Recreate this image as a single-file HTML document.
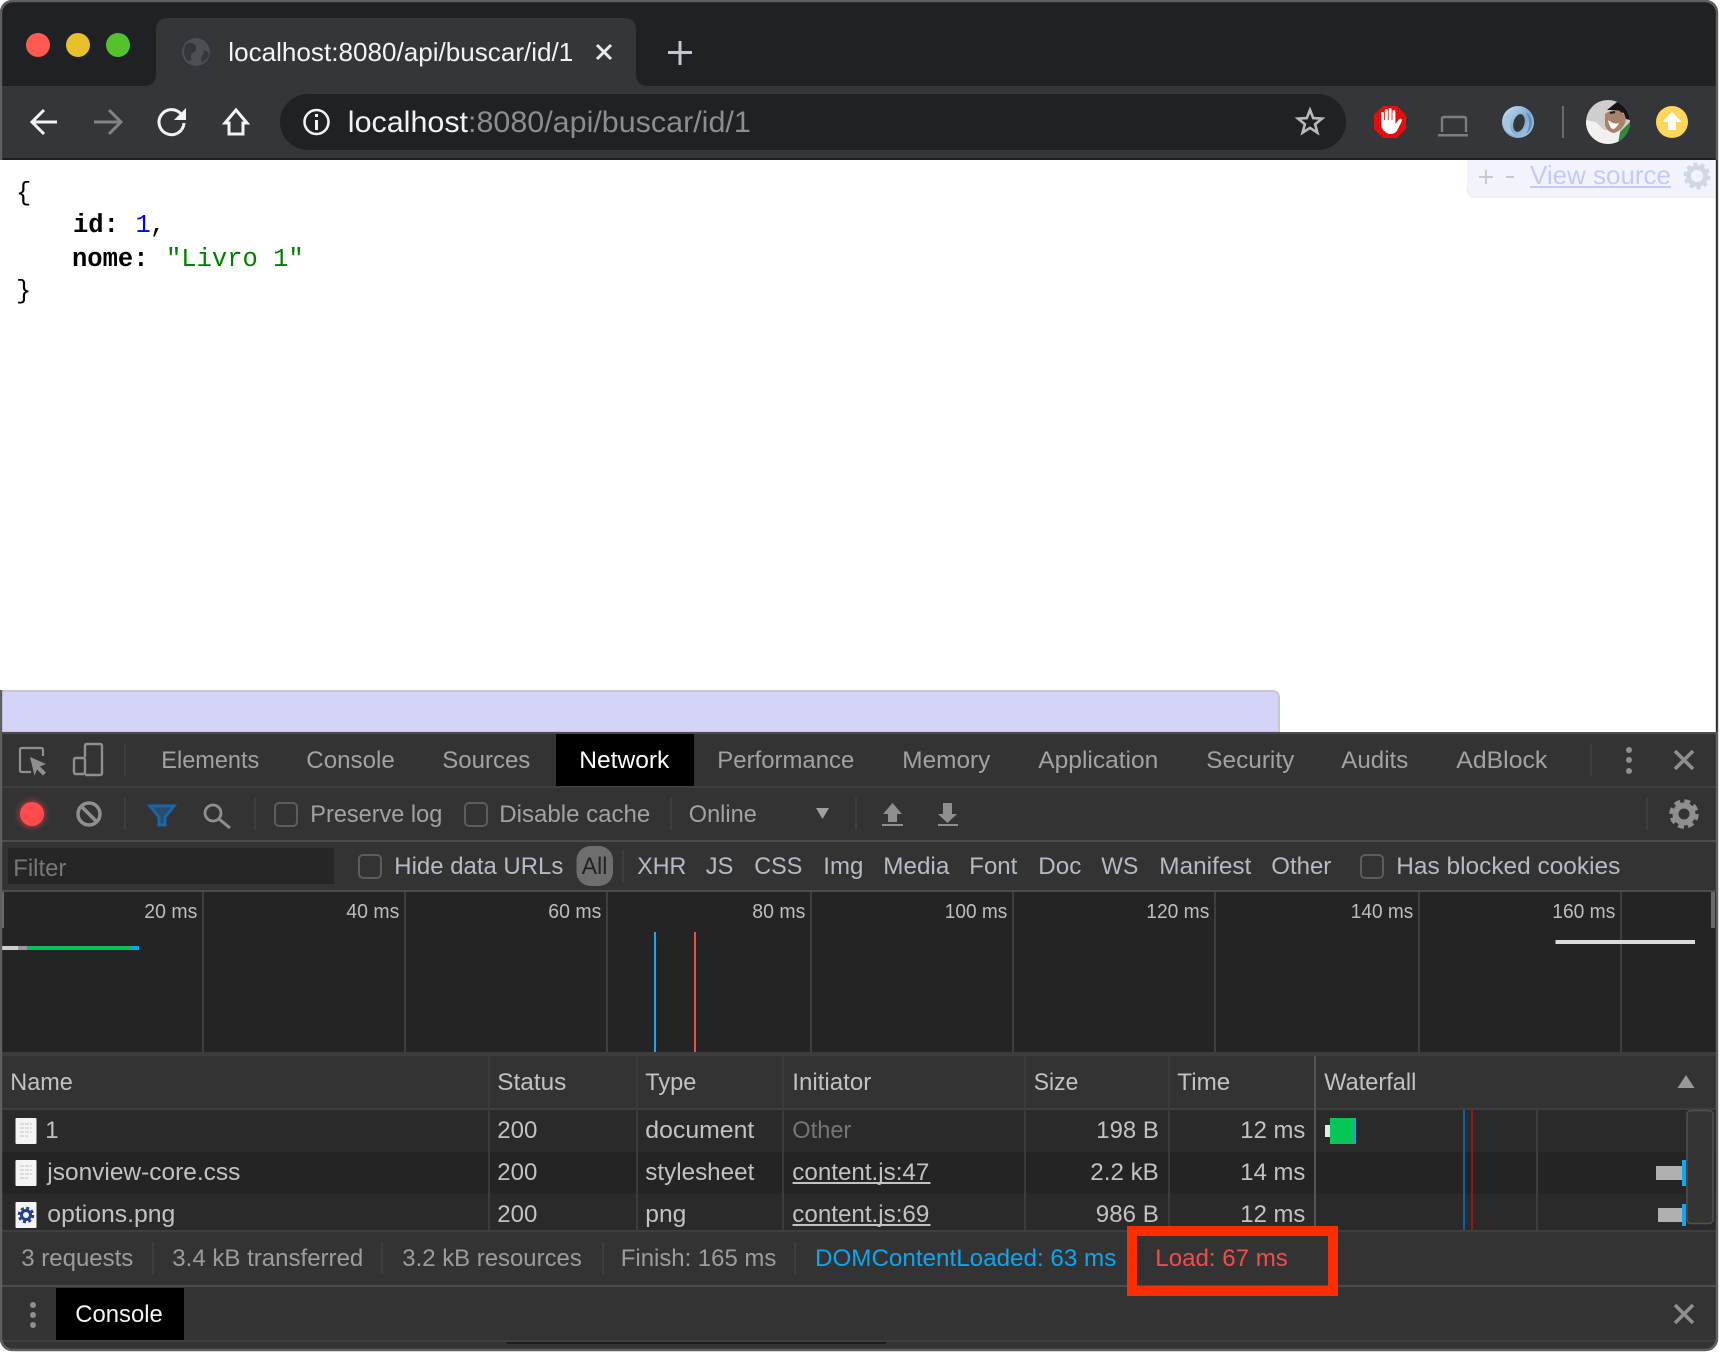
<!DOCTYPE html>
<html lang="en"><head><meta charset="utf-8"><title>localhost:8080/api/buscar/id/1</title>
<style>
html,body{margin:0;padding:0;width:1720px;height:1352px;overflow:hidden;background:#fff}
svg{display:block}
text{font-family:"Liberation Sans",sans-serif;white-space:pre;transform:translateX(-.7px)}
.m{font-family:"Liberation Mono",monospace;font-size:25.5px;transform:none}
.t{font-size:24px;fill:#a2a2a2}
.f{font-size:24px;fill:#b5bbc4}
.r{font-size:24px;fill:#c2c2c2}
.s{font-size:24px;fill:#9c9c9c}
.g{font-size:20px;fill:#bdbdbd}
.ln{fill:#3e3e3e}
</style></head><body>
<svg width="1720" height="1352" viewBox="0 0 1720 1352" xmlns="http://www.w3.org/2000/svg">
<defs>
<clipPath id="win"><rect x="0" y="0" width="1718" height="1351" rx="12"/></clipPath>
<linearGradient id="ring" x1="0" y1="0" x2="1" y2="1"><stop offset="0" stop-color="#d4e3f2"/><stop offset=".55" stop-color="#7ea8d2"/><stop offset="1" stop-color="#b4cfe8"/></linearGradient>
<clipPath id="av"><circle cx="1608" cy="122" r="22"/></clipPath>
<filter id="glow" x="-60%" y="-60%" width="220%" height="220%"><feGaussianBlur stdDeviation="3"/></filter>
</defs>
<g clip-path="url(#win)">
<!-- page -->
<rect width="1720" height="1352" fill="#fff"/>
<!-- tab strip -->
<rect width="1720" height="86" fill="#202124"/>
<rect width="1720" height="2" fill="#8a8a8a"/>
<path d="M144 86q12 0 12-12V30q0-12 12-12h456q12 0 12 12v44q0 12 12 12z" fill="#35363a"/>
<circle cx="38" cy="45" r="12" fill="#ff5a52"/>
<circle cx="78" cy="45" r="12" fill="#e8c02a"/>
<circle cx="118" cy="45" r="12" fill="#53c22b"/>
<circle cx="196" cy="52" r="14" fill="#4c4e53"/>
<path d="M186 44q6-3 9 1t-1 7q-5 3-2 8l-4 1q-7-7-2-17zM204 50q4 1 5 4-2 6-7 8-2-3 0-6t2-6z" fill="#35363a"/>
<text x="229" y="61" font-size="26" fill="#f1f3f4" textLength="345" lengthAdjust="spacingAndGlyphs">localhost:8080/api/buscar/id/1</text>
<path d="M597 45l14 14M611 45l-14 14" stroke="#e8eaed" stroke-width="3" fill="none"/>
<path d="M680 41v24M668 52.500h24" stroke="#c4c7cc" stroke-width="3" fill="none"/>
<!-- toolbar -->
<rect y="86" width="1720" height="72" fill="#35363a"/>
<rect y="158" width="1720" height="2" fill="#1f1f22"/>
<rect x="280" y="94" width="1066" height="56" rx="28" fill="#202124"/>
<path d="M57 122H33M44 110l-12 12 12 12" stroke="#f1f3f4" stroke-width="3" fill="none"/>
<path d="M94 122h26M109 110l12 12-12 12" stroke="#818386" stroke-width="3" fill="none"/>
<path d="M181 114a12.500 12.500 0 1 0 3 9" stroke="#f1f3f4" stroke-width="3" fill="none"/>
<path d="M174 120h12v-12z" fill="#f1f3f4"/>
<path d="M236 110l-11 13h4v11h14v-11h4z" stroke="#f1f3f4" stroke-width="3" fill="none" stroke-linejoin="miter"/>
<circle cx="316.500" cy="122" r="12" stroke="#f1f3f4" stroke-width="2.600" fill="none"/>
<rect x="315" y="120" width="3" height="10" fill="#f1f3f4"/><rect x="315" y="114" width="3" height="3" fill="#f1f3f4"/>
<text x="348.500" y="132" font-size="30" fill="#f1f3f4" textLength="403" lengthAdjust="spacingAndGlyphs">localhost<tspan fill="#8b8d90">:8080/api/buscar/id/1</tspan></text>
<path d="M1310 109.900L1313.200 118.100L1322 118.600L1315.100 124.200L1317.400 132.700L1310 127.900L1302.600 132.700L1304.900 124.200L1298 118.600L1306.800 118.100Z" stroke="#b8b9bb" stroke-width="2.600" fill="none"/>
<!-- ext icons -->
<path d="M1383 106h14l9 9v14l-9 9h-14l-9-9v-14z" fill="#e40e0e"/>
<path d="M1384 131q-3-3-3-8v-9q0-2 1.500-2t1.500 2v6h.800v-9q0-2 1.500-2t1.500 2v9h.800v-10q0-2 1.500-2t1.500 2v10h.800v-8q0-2 1.500-2t1.500 2v12l3-4q2-2 3-1t0 3l-4 8q-2 4-7 4-3 0-6-3z" fill="#fff"/>
<path d="M1442 132v-13q0-2 2-2h20q2 0 2 2v13" stroke="#7d7d7d" stroke-width="2.400" fill="none"/>
<rect x="1438" y="134" width="30" height="2.500" fill="#7d7d7d"/>
<circle cx="1518" cy="122" r="16" fill="url(#ring)"/>
<ellipse cx="1519" cy="123" rx="5.500" ry="9" fill="#35363a" transform="rotate(15 1519 123)"/>
<path d="M1503 124q2-14 17-16-9 5-10 14t6 14q-11-2-13-12z" fill="#a9c6e2"/>
<path d="M1526 112q6 4 6 11t-6 11q3-5 3-11t-3-11z" fill="#5d8dbd"/>
<rect x="1562" y="106" width="2" height="32" fill="#6a6b6e"/>
<g clip-path="url(#av)">
<rect x="1586" y="100" width="44" height="44" fill="#cfcdcd"/>
<path d="M1586 120l10 2 8 8 16 0v14h-34z" fill="#f2f1f0"/>
<path d="M1605 114q8-6 17-3l4 8q-2 11-12 14-7-1-9-8z" fill="#a9826a"/>
<path d="M1607 110l10-8 13 0 0 18-4-1-3-8-10-1z" fill="#141414"/>
<path d="M1620 132l10-10v16l-12 6z" fill="#2f8a3c"/>
<path d="M1608 120q6 5 11 3-3 6-6 6t-5-9z" fill="#fff"/>
<path d="M1610 113l5-1M1620 111l4 1" stroke="#1c1c1c" stroke-width="2"/>
</g>
<circle cx="1672" cy="122" r="16" fill="#ffd65c"/>
<path d="M1672 112l10 10h-6v8h-8v-8h-6z" fill="#fff"/>
<!-- view source -->
<path d="M1467 160h251v37h-243q-8 0-8-8z" fill="#f2f3fd"/>
<path d="M1467 187q0 10 8 10h243" stroke="#ecedf3" stroke-width="1.500" fill="none"/>
<path d="M1486 170v14M1479 177h14" stroke="#c9c9c9" stroke-width="2" fill="none"/>
<rect x="1506" y="176" width="8" height="2" fill="#c9c9c9"/>
<text x="1530.700" y="184" font-size="26" fill="#c3c9ff" textLength="141" lengthAdjust="spacingAndGlyphs">View source</text>
<rect x="1530" y="186" width="141" height="2" fill="#c3c9ff"/>
<circle cx="1697" cy="176" r="8.500" fill="none" stroke="#d0d8e6" stroke-width="5"/>
<circle cx="1697" cy="176" r="12" fill="none" stroke="#d0d8e6" stroke-width="3" stroke-dasharray="4 3.500"/>
<!-- JSON -->
<text class="m" x="16" y="200">{</text>
<text class="m" x="73" y="232" font-weight="bold">id:</text>
<text class="m" x="135.500" y="232" fill="#0000ff">1</text>
<text class="m" x="150" y="232">,</text>
<text class="m" x="72" y="266" font-weight="bold">nome:</text>
<text class="m" x="166" y="266" fill="#008000">"Livro 1"</text>
<text class="m" x="16" y="298">}</text>
<!-- lavender -->
<path d="M0 691h1272q7 0 7 7v34H0z" fill="#d3d4f7" stroke="#c8c8c8" stroke-width="2"/>
<!-- devtools -->
<rect y="732" width="1720" height="620" fill="#333"/>
<rect y="732" width="1720" height="2" fill="#4c4c4c"/>
<rect x="556" y="734" width="138" height="52" fill="#000"/>
<rect y="786" width="1720" height="2" class="ln"/>
<rect y="840" width="1720" height="2" fill="#4c4c4c"/>
<rect y="890" width="1720" height="2" fill="#4c4c4c"/>
<!-- row1 icons -->
<path d="M31 772h-9q-2 0-2-2v-20q0-2 2-2h19q2 0 2 2v6" stroke="#8f8f8f" stroke-width="2.200" fill="none"/>
<path d="M30 757l16 7-6 2.500 6 6-3 3-6-6-2.500 6z" fill="#8f8f8f"/>
<path d="M85 757v-11q0-2 2-2h13q2 0 2 2v27q0 2-2 2H85" stroke="#8f8f8f" stroke-width="2.400" fill="none"/>
<rect x="74" y="758" width="11" height="16" rx="1.500" fill="none" stroke="#8f8f8f" stroke-width="2.400"/>
<rect x="124" y="744" width="2" height="32" class="ln"/>
<text class="t" x="162" y="768" textLength="98" lengthAdjust="spacingAndGlyphs">Elements</text>
<text class="t" x="307" y="768" textLength="88.500" lengthAdjust="spacingAndGlyphs">Console</text>
<text class="t" x="443" y="768" textLength="88" lengthAdjust="spacingAndGlyphs">Sources</text>
<text x="580" y="768" font-size="24" fill="#fff" textLength="90" lengthAdjust="spacingAndGlyphs">Network</text>
<text class="t" x="718" y="768" textLength="137" lengthAdjust="spacingAndGlyphs">Performance</text>
<text class="t" x="903" y="768" textLength="88" lengthAdjust="spacingAndGlyphs">Memory</text>
<text class="t" x="1039" y="768" textLength="120" lengthAdjust="spacingAndGlyphs">Application</text>
<text class="t" x="1207" y="768" textLength="88" lengthAdjust="spacingAndGlyphs">Security</text>
<text class="t" x="1342" y="768" textLength="67" lengthAdjust="spacingAndGlyphs">Audits</text>
<text class="t" x="1457" y="768" textLength="91" lengthAdjust="spacingAndGlyphs">AdBlock</text>
<rect x="1590" y="744" width="2" height="32" class="ln"/>
<circle cx="1629" cy="750" r="3" fill="#8f8f8f"/><circle cx="1629" cy="760" r="3" fill="#8f8f8f"/><circle cx="1629" cy="771" r="3" fill="#8f8f8f"/>
<path d="M1675 751l18 18M1693 751l-18 18" stroke="#8f8f8f" stroke-width="3.500" fill="none"/>
<!-- row2 -->
<circle cx="32" cy="814" r="14" fill="#ff4b4b" opacity=".45" filter="url(#glow)"/>
<circle cx="32" cy="814" r="12" fill="#ff4b4b"/>
<circle cx="89" cy="814" r="11" fill="none" stroke="#8f8f8f" stroke-width="3.500"/>
<path d="M81 806l16 16" stroke="#8f8f8f" stroke-width="3.500"/>
<rect x="124" y="798" width="2" height="32" class="ln"/>
<path d="M150 806h24l-9 11v8h-6v-8z" fill="#2e4a66" stroke="#1467ab" stroke-width="3"/>
<circle cx="213" cy="813" r="8" fill="none" stroke="#8f8f8f" stroke-width="2.800"/>
<path d="M219 819l11 9" stroke="#8f8f8f" stroke-width="3"/>
<rect x="254" y="798" width="2" height="32" class="ln"/>
<rect x="275" y="803" width="22" height="23" rx="4" fill="none" stroke="#5c5c5c" stroke-width="2"/>
<text class="t" x="311" y="822" textLength="132" lengthAdjust="spacingAndGlyphs">Preserve log</text>
<rect x="465" y="803" width="22" height="23" rx="4" fill="none" stroke="#5c5c5c" stroke-width="2"/>
<text class="t" x="500" y="822" textLength="151" lengthAdjust="spacingAndGlyphs">Disable cache</text>
<rect x="670" y="798" width="2" height="32" class="ln"/>
<text class="t" x="689.500" y="822" textLength="68" lengthAdjust="spacingAndGlyphs">Online</text>
<path d="M816 808h13l-6.500 11z" fill="#a0a0a0"/>
<rect x="855" y="798" width="2" height="32" class="ln"/>
<path d="M892.500 803l9.500 11h-5v8h-9v-8h-5z" fill="#8f8f8f"/><rect x="882" y="824" width="21" height="2" fill="#8f8f8f"/>
<path d="M943 803h9v11h5l-9.500 9-9.500-9h5z" fill="#8f8f8f"/><rect x="938" y="824" width="20" height="2" fill="#8f8f8f"/>
<rect x="1646" y="798" width="2" height="32" class="ln"/>
<circle cx="1684" cy="814" r="8.500" fill="none" stroke="#8f8f8f" stroke-width="6"/>
<circle cx="1684" cy="814" r="13" fill="none" stroke="#8f8f8f" stroke-width="3.500" stroke-dasharray="6 4.200"/>
<!-- row3 -->
<rect x="8" y="848" width="326" height="36" fill="#262626"/>
<text x="14" y="876" font-size="24" fill="#777" textLength="53" lengthAdjust="spacingAndGlyphs">Filter</text>
<rect x="359" y="855" width="22" height="23" rx="4" fill="none" stroke="#5c5c5c" stroke-width="2"/>
<text class="f" x="395" y="874" textLength="169" lengthAdjust="spacingAndGlyphs">Hide data URLs</text>
<rect x="576.500" y="846" width="36.500" height="40" rx="14" fill="#6e6e6e"/>
<text x="582.500" y="874" font-size="24" fill="#222" textLength="25.500" lengthAdjust="spacingAndGlyphs">All</text>
<rect x="622" y="850" width="2" height="32" class="ln"/>
<text class="f" x="638" y="874" textLength="49" lengthAdjust="spacingAndGlyphs">XHR</text>
<text class="f" x="706.500" y="874" textLength="27.500" lengthAdjust="spacingAndGlyphs">JS</text>
<text class="f" x="755" y="874" textLength="48" lengthAdjust="spacingAndGlyphs">CSS</text>
<text class="f" x="824" y="874" textLength="40" lengthAdjust="spacingAndGlyphs">Img</text>
<text class="f" x="884" y="874" textLength="66" lengthAdjust="spacingAndGlyphs">Media</text>
<text class="f" x="970" y="874" textLength="48" lengthAdjust="spacingAndGlyphs">Font</text>
<text class="f" x="1039" y="874" textLength="43" lengthAdjust="spacingAndGlyphs">Doc</text>
<text class="f" x="1102" y="874" textLength="37" lengthAdjust="spacingAndGlyphs">WS</text>
<text class="f" x="1160" y="874" textLength="92" lengthAdjust="spacingAndGlyphs">Manifest</text>
<text class="f" x="1272" y="874" textLength="60" lengthAdjust="spacingAndGlyphs">Other</text>
<rect x="1361" y="855" width="22" height="23" rx="4" fill="none" stroke="#5c5c5c" stroke-width="2"/>
<text class="f" x="1397" y="874" textLength="224" lengthAdjust="spacingAndGlyphs">Has blocked cookies</text>
<!-- timeline -->
<rect y="892" width="1720" height="160" fill="#242424"/>
<rect x="202" y="892" width="2" height="160" class="ln"/><rect x="404" y="892" width="2" height="160" class="ln"/><rect x="606" y="892" width="2" height="160" class="ln"/><rect x="810" y="892" width="2" height="160" class="ln"/><rect x="1012" y="892" width="2" height="160" class="ln"/><rect x="1214" y="892" width="2" height="160" class="ln"/><rect x="1418" y="892" width="2" height="160" class="ln"/><rect x="1620" y="892" width="2" height="160" class="ln"/>
<text class="g" x="145" y="918" textLength="53" lengthAdjust="spacingAndGlyphs">20 ms</text>
<text class="g" x="347" y="918" textLength="53" lengthAdjust="spacingAndGlyphs">40 ms</text>
<text class="g" x="549" y="918" textLength="53" lengthAdjust="spacingAndGlyphs">60 ms</text>
<text class="g" x="753" y="918" textLength="53" lengthAdjust="spacingAndGlyphs">80 ms</text>
<text class="g" x="945.500" y="918" textLength="62.500" lengthAdjust="spacingAndGlyphs">100 ms</text>
<text class="g" x="1147" y="918" textLength="63" lengthAdjust="spacingAndGlyphs">120 ms</text>
<text class="g" x="1351.500" y="918" textLength="62.500" lengthAdjust="spacingAndGlyphs">140 ms</text>
<text class="g" x="1553" y="918" textLength="63" lengthAdjust="spacingAndGlyphs">160 ms</text>
<rect x="2" y="892" width="2" height="36" fill="#6a6a6a"/><rect x="1711" y="892" width="4" height="36" fill="#6a6a6a"/>
<rect x="2" y="946" width="16" height="4" fill="#cfcfcf"/><rect x="18" y="946" width="9" height="4" fill="#9a9a9a"/><rect x="27" y="946" width="104" height="4" fill="#0bbf5c"/><rect x="131" y="946" width="8" height="4" fill="#0ea5f0"/>
<rect x="1555.500" y="940" width="139.500" height="4" fill="#dcdcdc"/>
<rect x="654" y="932" width="2" height="120" fill="#18a5f3"/>
<rect x="694" y="932" width="2" height="120" fill="#f04c4c"/>
<!-- table header -->
<rect y="1052" width="1720" height="4" fill="#3c3c3c"/>
<rect y="1056" width="1720" height="52" fill="#333"/>
<rect y="1108" width="1720" height="2" class="ln"/>
<text class="r" x="11" y="1090" textLength="62.500" lengthAdjust="spacingAndGlyphs">Name</text>
<text class="r" x="498" y="1090" textLength="69" lengthAdjust="spacingAndGlyphs">Status</text>
<text class="r" x="646" y="1090" textLength="51" lengthAdjust="spacingAndGlyphs">Type</text>
<text class="r" x="793" y="1090" textLength="79" lengthAdjust="spacingAndGlyphs">Initiator</text>
<text class="r" x="1034.500" y="1090" textLength="44.500" lengthAdjust="spacingAndGlyphs">Size</text>
<text class="r" x="1178" y="1090" textLength="53" lengthAdjust="spacingAndGlyphs">Time</text>
<text class="r" x="1325" y="1090" textLength="92" lengthAdjust="spacingAndGlyphs">Waterfall</text>
<path d="M1686 1075l8.500 13h-17z" fill="#9a9a9a"/>
<!-- rows -->
<rect y="1110" width="1720" height="42" fill="#2a2a2a"/>
<rect y="1152" width="1720" height="42" fill="#242424"/>
<rect y="1194" width="1720" height="36" fill="#2a2a2a"/>
<g fill="#3b3b3b"><rect x="488" y="1056" width="2" height="174"/><rect x="636" y="1056" width="2" height="174"/><rect x="782" y="1056" width="2" height="174"/><rect x="1024" y="1056" width="2" height="174"/><rect x="1168" y="1056" width="2" height="174"/></g>
<rect x="1314" y="1056" width="2" height="174" fill="#555"/>
<!-- file icons -->
<rect x="15.500" y="1118" width="21" height="26" rx="1" fill="#f4f4f4"/>
<path d="M20 1124h12M20 1128h12M20 1132h12M20 1136h8" stroke="#d4d4d4" stroke-width="1.500" stroke-dasharray="4 1"/>
<rect x="15.500" y="1160" width="21" height="26" rx="1" fill="#f4f4f4"/>
<path d="M20 1166h12M20 1170h12M20 1174h12M20 1178h8" stroke="#d4d4d4" stroke-width="1.500" stroke-dasharray="4 1"/>
<rect x="15.500" y="1202" width="21" height="26" rx="1" fill="#f4f4f4"/>
<circle cx="26" cy="1215" r="4.500" fill="none" stroke="#22408c" stroke-width="3"/>
<circle cx="26" cy="1215" r="7" fill="none" stroke="#22408c" stroke-width="2.500" stroke-dasharray="3 2.500"/>
<!-- row text -->
<text class="r" x="46" y="1138">1</text>
<text class="r" x="498" y="1138" textLength="40" lengthAdjust="spacingAndGlyphs">200</text>
<text class="r" x="646" y="1138" textLength="109" lengthAdjust="spacingAndGlyphs">document</text>
<text x="793" y="1138" font-size="24" fill="#757575" textLength="59" lengthAdjust="spacingAndGlyphs">Other</text>
<text class="r" x="1097" y="1138" textLength="62.500" lengthAdjust="spacingAndGlyphs">198 B</text>
<text class="r" x="1241" y="1138" textLength="65" lengthAdjust="spacingAndGlyphs">12 ms</text>
<text class="r" x="48" y="1180" textLength="193" lengthAdjust="spacingAndGlyphs">jsonview-core.css</text>
<text class="r" x="498" y="1180" textLength="40" lengthAdjust="spacingAndGlyphs">200</text>
<text class="r" x="646" y="1180" textLength="109" lengthAdjust="spacingAndGlyphs">stylesheet</text>
<text class="r" x="793" y="1180" textLength="137" lengthAdjust="spacingAndGlyphs">content.js:47</text>
<rect x="792.500" y="1182" width="138" height="2" fill="#c2c2c2"/>
<text class="r" x="1091" y="1180" textLength="68.500" lengthAdjust="spacingAndGlyphs">2.2 kB</text>
<text class="r" x="1241" y="1180" textLength="65" lengthAdjust="spacingAndGlyphs">14 ms</text>
<text class="r" x="48" y="1222" textLength="128" lengthAdjust="spacingAndGlyphs">options.png</text>
<text class="r" x="498" y="1222" textLength="40" lengthAdjust="spacingAndGlyphs">200</text>
<text class="r" x="646" y="1222" textLength="41" lengthAdjust="spacingAndGlyphs">png</text>
<text class="r" x="793" y="1222" textLength="137" lengthAdjust="spacingAndGlyphs">content.js:69</text>
<rect x="792.500" y="1224" width="138" height="2" fill="#c2c2c2"/>
<text class="r" x="1096.500" y="1222" textLength="63" lengthAdjust="spacingAndGlyphs">986 B</text>
<text class="r" x="1241" y="1222" textLength="65" lengthAdjust="spacingAndGlyphs">12 ms</text>
<!-- waterfall -->
<rect x="1463" y="1110" width="2" height="120" fill="#0f5bb5"/>
<rect x="1471" y="1110" width="2" height="120" fill="#a01212"/>
<rect x="1536" y="1110" width="2" height="120" class="ln"/>
<rect x="1325" y="1125" width="5" height="12" fill="#e8e8e8"/>
<rect x="1330" y="1118" width="23" height="26" fill="#07c655"/>
<rect x="1353" y="1118" width="3" height="26" fill="#0ea5f0"/>
<rect x="1656" y="1166" width="26" height="14" fill="#b0b0b0"/>
<rect x="1682" y="1160" width="4" height="26" fill="#0ea8f5"/>
<rect x="1658" y="1208" width="24" height="14" fill="#b0b0b0"/>
<rect x="1682" y="1204" width="4" height="22" fill="#0ea8f5"/>
<rect x="1687" y="1110.500" width="26" height="113" rx="4" fill="#343434" stroke="#505050" stroke-width="1.500"/>
<!-- status -->
<rect y="1230" width="1720" height="2" class="ln"/>
<rect y="1285" width="1720" height="2" fill="#4c4c4c"/>
<text class="s" x="22" y="1266" textLength="112" lengthAdjust="spacingAndGlyphs">3 requests</text>
<rect x="152" y="1242" width="2" height="32" class="ln"/>
<text class="s" x="173" y="1266" textLength="191" lengthAdjust="spacingAndGlyphs">3.4 kB transferred</text>
<rect x="381" y="1242" width="2" height="32" class="ln"/>
<text class="s" x="403" y="1266" textLength="179.500" lengthAdjust="spacingAndGlyphs">3.2 kB resources</text>
<rect x="602" y="1242" width="2" height="32" class="ln"/>
<text class="s" x="621.500" y="1266" textLength="155.500" lengthAdjust="spacingAndGlyphs">Finish: 165 ms</text>
<rect x="794" y="1242" width="2" height="32" class="ln"/>
<text x="815.700" y="1266" font-size="24" fill="#0ea5f0" textLength="301.300" lengthAdjust="spacingAndGlyphs">DOMContentLoaded: 63 ms</text>
<text x="1156" y="1266" font-size="24" fill="#f24c4c" textLength="132.500" lengthAdjust="spacingAndGlyphs">Load: 67 ms</text>
<rect x="1132" y="1231" width="201" height="60" fill="none" stroke="#fe2d00" stroke-width="10"/>
<!-- drawer -->
<rect x="56" y="1288" width="128" height="52" fill="#000"/>
<text x="76" y="1322" font-size="24" fill="#f5f5f5" textLength="87.500" lengthAdjust="spacingAndGlyphs">Console</text>
<circle cx="33" cy="1305" r="3" fill="#8f8f8f"/><circle cx="33" cy="1315" r="3" fill="#8f8f8f"/><circle cx="33" cy="1325" r="3" fill="#8f8f8f"/>
<path d="M1675 1305l18 18M1693 1305l-18 18" stroke="#8f8f8f" stroke-width="3.500" fill="none"/>
<rect y="1340" width="1720" height="2" class="ln"/>
<rect x="507" y="1342" width="379" height="2" fill="#1e1e1e"/>
</g>
<rect x="1" y="1" width="1716" height="1349" rx="12" fill="none" stroke="#5f5f5f" stroke-width="2.400"/>
<!-- no visible left edge beside page content; thin dark right edge -->
<rect x="0" y="160" width="3" height="530" fill="#fff"/>
<rect x="1716" y="160" width="1.500" height="572" fill="#2a2a2a"/>
</svg>
</body></html>
